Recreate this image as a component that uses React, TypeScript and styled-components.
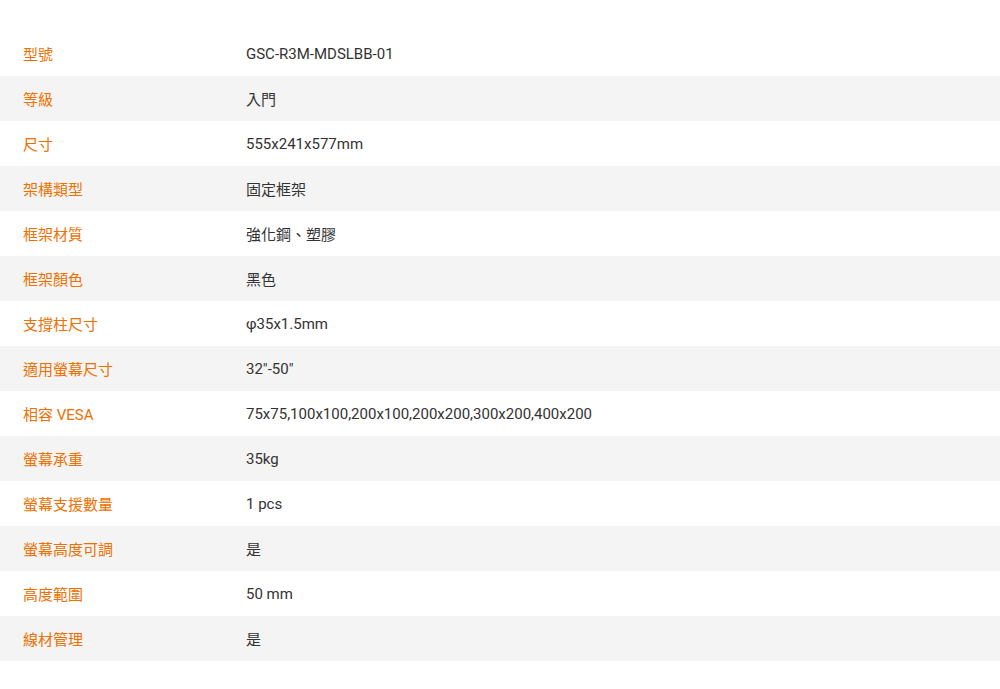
import React from 'react';
import styled, { createGlobalStyle } from 'styled-components';

const GlobalStyle = createGlobalStyle`
  body {
    margin: 0;
    background: #ffffff;
    font-family: Roboto, "Noto Sans CJK TC", sans-serif;
  }
`;

const SpecWrapper = styled.div`
  padding-top: 31px;
  display: flex;
  flex-direction: column;
`;

const SpecRow = styled.div<{ $shaded: boolean }>`
  display: grid;
  grid-template-columns: 223px 1fr;
  align-items: center;
  height: 45px;
  padding-left: 23px;
  background: ${p => (p.$shaded ? '#f4f4f4' : '#ffffff')};
  font-size: 15px;
`;

const SpecLabel = styled.div`
  color: #ee7000;
`;

const SpecValue = styled.div`
  color: #333333;
`;

const specs: [string, string][] = [
  ['型號', 'GSC-R3M-MDSLBB-01'],
  ['等級', '入門'],
  ['尺寸', '555x241x577mm'],
  ['架構類型', '固定框架'],
  ['框架材質', '強化鋼、塑膠'],
  ['框架顏色', '黑色'],
  ['支撐柱尺寸', 'φ35x1.5mm'],
  ['適用螢幕尺寸', '32"-50"'],
  ['相容 VESA', '75x75,100x100,200x100,200x200,300x200,400x200'],
  ['螢幕承重', '35kg'],
  ['螢幕支援數量', '1 pcs'],
  ['螢幕高度可調', '是'],
  ['高度範圍', '50 mm'],
  ['線材管理', '是'],
];

export default function App() {
  return (
    <>
      <GlobalStyle />
      <SpecWrapper>
        {specs.map(([label, value], i) => (
          <SpecRow key={label} $shaded={i % 2 === 1}>
            <SpecLabel>{label}</SpecLabel>
            <SpecValue>{value}</SpecValue>
          </SpecRow>
        ))}
      </SpecWrapper>
    </>
  );
}
